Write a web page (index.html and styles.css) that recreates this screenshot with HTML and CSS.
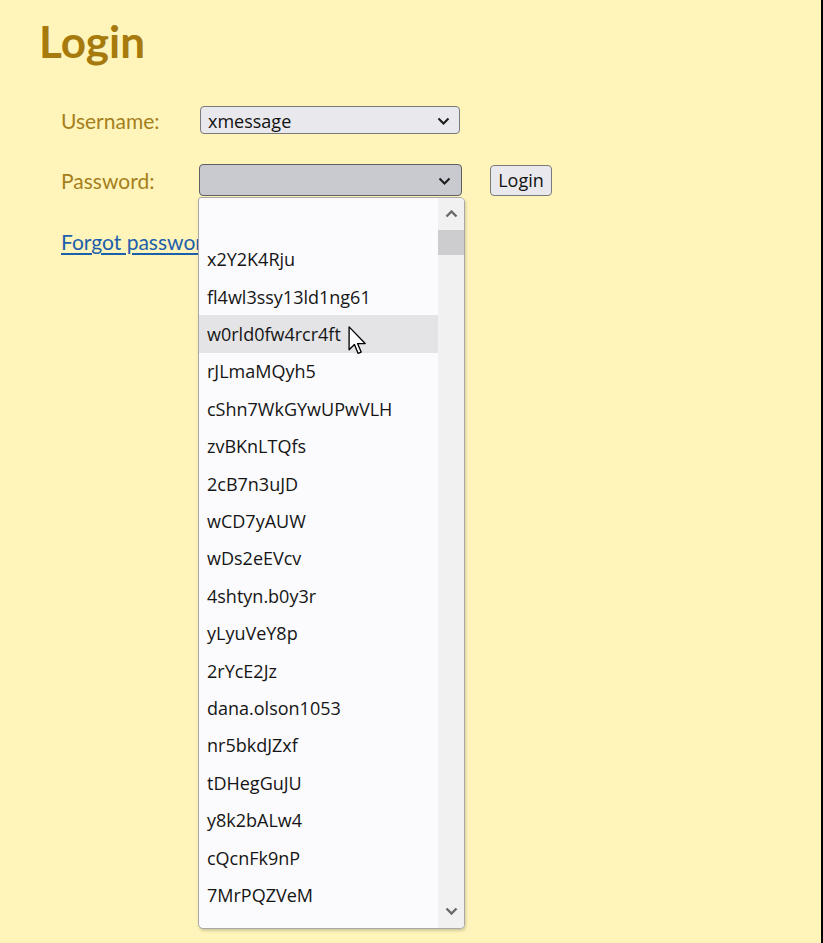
FILE: index.html
```html
<!DOCTYPE html>
<html lang="en">
<head>
<meta charset="utf-8">
<title>Login</title>
<link rel="stylesheet" href="styles.css">
</head>
<body>
<div class="page">
  <h1 class="title">Login</h1>
  <div class="form">
    <div class="row">
      <label class="label">Username:</label>
      <div class="select">
        <span class="value">xmessage</span>
        <svg class="chev" width="13" height="8" viewBox="0 0 13 8"><path d="M1.5 1.5 L6.5 6.5 L11.5 1.5" fill="none" stroke="#1b1b1b" stroke-width="2"/></svg>
      </div>
    </div>
    <div class="row row-pass">
      <label class="label">Password:</label>
      <div class="select-wrap">
        <div class="select open">
          <span class="value"></span>
          <svg class="chev" width="13" height="8" viewBox="0 0 13 8"><path d="M1.5 1.5 L6.5 6.5 L11.5 1.5" fill="none" stroke="#1b1b1b" stroke-width="2"/></svg>
        </div>
        <div class="popup">
          <ul class="list">
            <li class="item"></li>
            <li class="item">x2Y2K4Rju</li>
            <li class="item">fl4wl3ssy13ld1ng61</li>
            <li class="item hover">w0rld0fw4rcr4ft</li>
            <li class="item">rJLmaMQyh5</li>
            <li class="item">cShn7WkGYwUPwVLH</li>
            <li class="item">zvBKnLTQfs</li>
            <li class="item">2cB7n3uJD</li>
            <li class="item">wCD7yAUW</li>
            <li class="item">wDs2eEVcv</li>
            <li class="item">4shtyn.b0y3r</li>
            <li class="item">yLyuVeY8p</li>
            <li class="item">2rYcE2Jz</li>
            <li class="item">dana.olson1053</li>
            <li class="item">nr5bkdJZxf</li>
            <li class="item">tDHegGuJU</li>
            <li class="item">y8k2bALw4</li>
            <li class="item">cQcnFk9nP</li>
            <li class="item">7MrPQZVeM</li>
          </ul>
          <div class="scrollbar">
            <div class="sb-btn sb-up">
              <svg width="13" height="8" viewBox="0 0 13 8"><path d="M1.5 6.5 L6.5 1.5 L11.5 6.5" fill="none" stroke="#6a6a6a" stroke-width="2.4"/></svg>
            </div>
            <div class="sb-thumb"></div>
            <div class="sb-track"></div>
            <div class="sb-btn sb-down">
              <svg width="13" height="8" viewBox="0 0 13 8"><path d="M1.5 1.5 L6.5 6.5 L11.5 1.5" fill="none" stroke="#6a6a6a" stroke-width="2.4"/></svg>
            </div>
          </div>
          <svg class="cursor" width="19" height="29" viewBox="0 0 12.5 19.5"><path d="M0.6 0.6 V16 L4.2 12.5 L6.6 18.4 L8.7 17.5 L6.3 11.8 H11.4 Z" fill="#fff" stroke="#000" stroke-width="0.9" stroke-linejoin="round"/></svg>
        </div>
      </div>
      <button class="btn">Login</button>
    </div>
    <a class="forgot" href="#">Forgot password?</a>
  </div>
</div>
</body>
</html>
```

FILE: styles.css
```css
html, body {
  margin: 0;
  padding: 0;
}

body {
  background: #fff5bb;
}

.page {
  box-sizing: border-box;
  width: 823px;
  min-height: 943px;
  padding: 15px 0 0 39px;
  background: #fff5bb;
  border-right: 2px solid #000;
  overflow: hidden;
}

.title {
  margin: 0;
  font-family: Lato, "Open Sans", sans-serif;
  font-weight: 700;
  font-size: 44px;
  line-height: 53px;
  color: #a67a0c;
}

.form {
  margin: 38px 0 0 22px;
  display: flex;
  flex-direction: column;
  align-items: flex-start;
}

.row {
  display: flex;
  align-items: center;
}

.row-pass {
  margin-top: 30px;
}

.label {
  width: 139px;
  font-family: Lato, "Open Sans", sans-serif;
  font-size: 21px;
  color: #a57f1c;
}

.select {
  box-sizing: border-box;
  width: 260px;
  height: 28px;
  display: flex;
  align-items: center;
  justify-content: space-between;
  padding: 1px 9px 0 7px;
  background: #e9e9ed;
  border: 1px solid #7a7a7a;
  border-radius: 4px;
  font-family: "Open Sans", "Noto Sans", sans-serif;
  font-size: 18px;
  color: #111;
}

.select-wrap {
  position: relative;
  margin-left: -1px;
}

.select.open {
  width: 263px;
  height: 32px;
  padding-right: 10px;
  background: #c9cacf;
  border-color: #5f5f62;
}

.chev {
  display: block;
}

.btn {
  box-sizing: border-box;
  margin-left: 28px;
  width: 62px;
  height: 31px;
  padding: 0;
  background: #e9e9ed;
  border: 1px solid #7a7a7a;
  border-radius: 4px;
  font-family: "Open Sans", "Noto Sans", sans-serif;
  font-size: 18px;
  color: #111;
}

.forgot {
  margin-top: 33px;
  font-family: Lato, "Open Sans", sans-serif;
  font-size: 21px;
  line-height: 26px;
  color: #1c5fac;
  text-decoration: underline;
  text-underline-offset: 3px;
}

.popup {
  position: absolute;
  top: 100%;
  left: -1px;
  box-sizing: border-box;
  width: 267px;
  height: 732px;
  margin-top: 1px;
  display: flex;
  background: #fbfbfd;
  border: 1px solid #a8a8a8;
  border-radius: 3px 5px 5px 5px;
  box-shadow: 1px 2px 3px rgba(0, 0, 0, 0.18);
  overflow: hidden;
  z-index: 2;
}

.list {
  flex: 1;
  margin: 0;
  padding: 5px 0 0;
  list-style: none;
  overflow: hidden;
}

.item {
  box-sizing: border-box;
  height: 37.41px;
  padding-left: 8px;
  display: flex;
  align-items: center;
  font-family: "Open Sans", "Noto Sans", sans-serif;
  font-size: 18px;
  color: #151515;
  white-space: nowrap;
}

.item.hover {
  background: #e4e4e7;
}

.scrollbar {
  width: 26px;
  display: flex;
  flex-direction: column;
  background: #f1f1f2;
}

.sb-btn {
  display: flex;
  align-items: center;
  justify-content: center;
}

.sb-up {
  height: 32px;
}

.sb-down {
  height: 34px;
}

.sb-thumb {
  height: 25px;
  background: #cdcdcf;
}

.sb-track {
  flex: 1;
}

.cursor {
  position: absolute;
  left: 149px;
  top: 128px;
}
```
